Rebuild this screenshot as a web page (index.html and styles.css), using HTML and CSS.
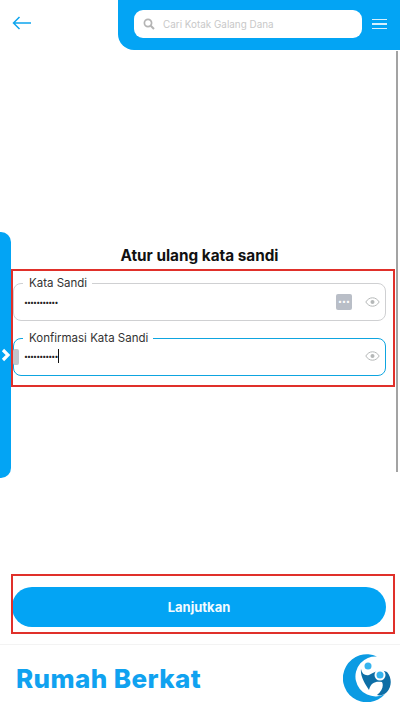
FILE: index.html
```html
<!DOCTYPE HTML>
<html>
	<head>
		<title>Atur ulang kata sandi</title>
		<meta name="viewport" content="width=device-width, initial-scale=1.0">
		<link rel="stylesheet" href="styles.css">
	</head>
	<body>
	<header>
		<a class="back" href="#">
			<svg width="20" height="14" viewBox="0 0 20 14"><path d="M19 7H1.500M7.500 1 1.500 7l6 6" fill="none" stroke="#0ea5ee" stroke-width="1.500"/></svg>
		</a>
		<div class="search-bar">
			<div class="search-box">
				<svg width="12" height="12" viewBox="0 0 12 12"><circle cx="5" cy="5" r="3.600" fill="none" stroke="#b4b4b4" stroke-width="1.700"/><path d="M7.700 7.700 11 11" stroke="#b4b4b4" stroke-width="2"/></svg>
				<span>Cari Kotak Galang Dana</span>
			</div>
			<div class="menu"><i></i><i></i><i></i></div>
		</div>
	</header>
	<div class="side-tab">
		<svg width="10" height="14" viewBox="0 0 10 14"><path d="M3 2 8 7 3 12" fill="none" stroke="#fff" stroke-width="3.200"/></svg>
	</div>
	<div class="scroll-thumb"></div>
	<main>
		<h1>Atur ulang kata sandi</h1>
		<div class="fields">
			<div class="mark mark-fields"></div>
			<fieldset class="field">
				<legend>Kata Sandi</legend>
				<span class="dots">&#8226;&#8226;&#8226;&#8226;&#8226;&#8226;&#8226;&#8226;&#8226;&#8226;&#8226;</span>
				<span class="key">&#8226;&#8226;&#8226;</span>
				<svg class="eye" width="15" height="10" viewBox="0 0 15 10"><path d="M.8 5C2.600 2.200 4.800.8 7.500.8s4.900 1.400 6.700 4.200c-1.800 2.800-4 4.200-6.700 4.200S2.600 7.800.8 5z" fill="none" stroke="#b5b8b8"/><circle cx="7.500" cy="5" r="2" fill="#b5b8b8"/></svg>
			</fieldset>
			<fieldset class="field active">
				<legend>Konfirmasi Kata Sandi</legend>
				<span class="handle"></span>
				<span class="dots">&#8226;&#8226;&#8226;&#8226;&#8226;&#8226;&#8226;&#8226;&#8226;&#8226;&#8226;</span>
				<span class="caret"></span>
				<svg class="eye" width="15" height="10" viewBox="0 0 15 10"><path d="M.8 5C2.600 2.200 4.800.8 7.500.8s4.900 1.400 6.700 4.200c-1.800 2.800-4 4.200-6.700 4.200S2.600 7.800.8 5z" fill="none" stroke="#b5b8b8"/><circle cx="7.500" cy="5" r="2" fill="#b5b8b8"/></svg>
			</fieldset>
		</div>
		<div class="actions">
			<div class="mark mark-actions"></div>
			<button>Lanjutkan</button>
		</div>
	</main>
	<footer>
		<span class="brand">Rumah Berkat</span>
		<svg class="logo" width="48" height="48" viewBox="0 0 48 48">
			<path d="M34 2.500A24 24 0 1 0 42 40 A20 20 0 1 1 34 2.500z" fill="#0b9be3"/>
			<path d="M18 15C19 20 22 22 26 21 31 18 38 15 44 18 49 24 49 32 44 38 41 41 37 42 34 41 39 37 41 32 39 28 33 27 28 28 26 36 22 30 17 22 18 15z" fill="#0d6ea6"/>
			<circle cx="25" cy="12" r="3.500" fill="#36b4ee"/>
			<circle cx="37" cy="21" r="5.500" fill="#fff"/>
			<circle cx="37" cy="21" r="3.500" fill="#36b4ee"/>
		</svg>
	</footer>
	</body>
</html>
```

FILE: styles.css
```css
html{
	height: 100%;
}

body{
	margin: 0;
	height: 711px;
	position: relative;
	overflow: hidden;
	display: flex;
	flex-direction: column;
	background: white;
	font-family: "Inter", "Open Sans", sans-serif;
	color: #111;
}

header{
	height: 50px;
	display: flex;
	justify-content: space-between;
}

.back{
	display: flex;
	padding: 16px 0 0 12px;
	height: 14px;
}

.search-bar{
	width: 282px;
	box-sizing: border-box;
	padding: 10px 13px 12px 16px;
	display: flex;
	align-items: center;
	gap: 10px;
	background: #03a4f4;
	border-bottom-left-radius: 16px;
}

.search-box{
	flex: 1;
	height: 28px;
	background: white;
	border-radius: 9px;
	display: flex;
	align-items: center;
	gap: 8px;
	padding-left: 9px;
	font-size: 9.900px;
	color: #c8c8c8;
}

.menu{
	width: 15px;
	display: flex;
	flex-direction: column;
	gap: 3px;
}

.menu i{
	height: 1.500px;
	background: #d6f0fd;
}

.side-tab{
	position: absolute;
	left: 0;
	top: 232px;
	width: 11px;
	height: 246px;
	background: #03a4f4;
	border-radius: 0 10px 10px 0;
	display: flex;
	align-items: center;
}

.scroll-thumb{
	position: absolute;
	left: 396px;
	top: 51px;
	width: 2px;
	height: 421px;
	background: #a3a3a3;
}

main{
	flex: 1;
	display: flex;
	flex-direction: column;
	padding: 197px 14px 0 13px;
}

h1{
	margin: 0;
	font-size: 15.300px;
	line-height: 18px;
	font-weight: 700;
	text-align: center;
}

.fields{
	position: relative;
	margin-top: 11px;
	display: flex;
	flex-direction: column;
	gap: 10px;
}

.mark{
	position: absolute;
	border: 2px solid #e0302a;
}

.mark-fields{
	left: -2px;
	right: -9px;
	top: -7px;
	height: 114px;
}

.mark-actions{
	left: -2px;
	right: -9px;
	top: -13px;
	height: 56px;
}

.field{
	margin: 0;
	min-width: 0;
	height: 45px;
	box-sizing: border-box;
	padding: 4px 5px 0 10px;
	border: 1px solid #cfd0d2;
	border-radius: 8px;
	display: flex;
	align-items: center;
	position: relative;
}

.field legend{
	margin-left: -1px;
	padding: 0 5px 0 6px;
	font-size: 11.500px;
	line-height: 14px;
	color: #333;
}

.active{
	border-color: #0ea5e0;
}

.dots{
	font-size: 7px;
	letter-spacing: -.9px;
	color: #222;
}

.caret{
	width: 1px;
	height: 14px;
	margin-left: 1px;
	background: #111;
}

.key{
	margin-left: auto;
	width: 16px;
	height: 16px;
	border-radius: 2px;
	background: #b9bec7;
	color: white;
	font-size: 7px;
	line-height: 16px;
	text-align: center;
}

.eye{
	margin-left: 13px;
}

.active .eye{
	margin-left: auto;
}

.handle{
	position: absolute;
	left: -1px;
	top: 4px;
	width: 6px;
	height: 16px;
	border-radius: 2px;
	background: #c3c5ca;
}

.actions{
	position: relative;
	margin-top: auto;
	margin-bottom: 17px;
}

button{
	display: block;
	width: 374px;
	height: 40px;
	margin-left: -1px;
	border: none;
	border-radius: 20px;
	background: #03a4f4;
	color: #f4fbff;
	font-family: "Inter", "Open Sans", sans-serif;
	font-size: 13px;
	font-weight: 700;
}

footer{
	height: 67px;
	box-sizing: border-box;
	border-top: 1px solid #f3f3f3;
	padding: 0 9px 0 16px;
	display: flex;
	align-items: center;
	justify-content: space-between;
}

.brand{
	font-family: "Inter", sans-serif;
	font-size: 26px;
	font-weight: 800;
	letter-spacing: .4px;
	color: #10a2f0;
}
```
